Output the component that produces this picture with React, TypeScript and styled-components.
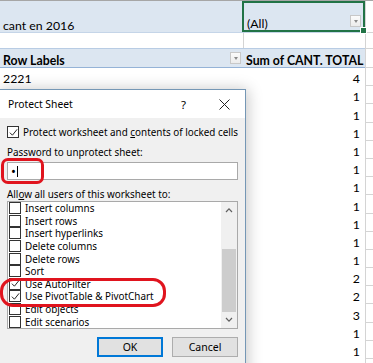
import React from 'react';
import styled, { createGlobalStyle } from 'styled-components';

const GlobalStyle = createGlobalStyle`
  html, body {
    margin: 0;
    padding: 0;
    background: #fff;
    overflow: hidden;
  }
`;

const SHEET_FONT = `Lato, 'Liberation Sans', sans-serif`;
const UI_FONT = `'Noto Sans', 'Open Sans', sans-serif`;

const values = [4, 1, 1, 1, 1, 1, 1, 1, 1, 1, 1, 2, 2, 3, 1, 1, 2];

const permissions = [
  { label: 'Insert columns', checked: false },
  { label: 'Insert rows', checked: false },
  { label: 'Insert hyperlinks', checked: false },
  { label: 'Delete columns', checked: false },
  { label: 'Delete rows', checked: false },
  { label: 'Sort', checked: false },
  { label: 'Use AutoFilter', checked: true },
  { label: 'Use PivotTable & PivotChart', checked: true },
  { label: 'Edit objects', checked: false },
  { label: 'Edit scenarios', checked: false },
];

const Page = styled.div`
  position: relative;
  width: 373px;
  height: 363px;
  overflow: hidden;
  border-top: 1px solid #a6a6a6;
  box-sizing: border-box;
  font-family: ${SHEET_FONT};
  font-size: 12.3px;
  color: #000;
`;

const Row = styled.div<{ $h: number; $tint?: boolean; $line?: string }>`
  display: grid;
  grid-template-columns: 243px 122px 1fr;
  height: ${p => p.$h}px;
  box-sizing: border-box;
  border-bottom: 1px solid ${p => p.$line || 'transparent'};
  background: ${p => (p.$tint ? '#dce6f1' : '#fff')};
`;

const Cell = styled.div<{ $bold?: boolean; $right?: boolean; $divider?: boolean }>`
  position: relative;
  display: flex;
  align-items: flex-end;
  justify-content: ${p => (p.$right ? 'flex-end' : 'flex-start')};
  padding: 0 5px 0 3px;
  font-weight: ${p => (p.$bold ? 700 : 400)};
  white-space: nowrap;
  overflow: hidden;
  line-height: 13px;
  border-left: ${p => (p.$divider ? '1px solid #d4d4d4' : 'none')};
`;

const GridCell = styled.div`
  background: #fff;
  border-left: 1px solid #d4d4d4;
  border-bottom: 1px solid #d4d4d4;
  margin-bottom: -1px;
`;

const ActiveCell = styled(Cell)`
  margin-left: -1px;
  border: 2px solid #217346;
  padding-bottom: 0;
  overflow: visible;
  &::after {
    content: '';
    position: absolute;
    right: -4px;
    bottom: -4px;
    width: 5px;
    height: 5px;
    background: #217346;
    border: 1px solid #fff;
  }
`;

const DropButton = styled.span`
  position: absolute;
  right: 2px;
  bottom: 3px;
  width: 11px;
  height: 12px;
  box-sizing: border-box;
  border: 1px solid #c8c8c8;
  background: linear-gradient(#fbfbfb, #ececec);
  display: flex;
  align-items: center;
  justify-content: center;
  &::before {
    content: '';
    border-left: 2.5px solid transparent;
    border-right: 2.5px solid transparent;
    border-top: 3px solid #8a8a8a;
  }
`;

const Dialog = styled.div`
  position: absolute;
  left: -1px;
  top: 88px;
  width: 247px;
  height: 290px;
  box-sizing: border-box;
  border: 1px solid #7597b5;
  background: #f0f0f0;
  box-shadow: 2px 0 14px rgba(0, 0, 0, 0.22);
  font-family: ${UI_FONT};
  font-size: 9.9px;
  color: #000;
`;

const TitleBar = styled.div`
  display: flex;
  align-items: center;
  height: 28px;
  background: #fff;
  padding-left: 8px;
  font-size: 10.3px;
`;

const TitleText = styled.div`
  flex: 1;
`;

const TitleButton = styled.div`
  width: 41px;
  display: flex;
  justify-content: center;
  align-items: center;
  font-size: 11.5px;
`;

const Body = styled.div`
  display: flex;
  flex-direction: column;
  padding: 8px 6px 0 7px;
`;

const CheckRow = styled.label<{ $h?: number }>`
  display: flex;
  align-items: center;
  gap: 4px;
  height: ${p => p.$h || 13}px;
  white-space: nowrap;
`;

const Box = styled.span<{ $size?: number }>`
  flex: none;
  width: ${p => p.$size || 12}px;
  height: ${p => p.$size || 12}px;
  box-sizing: border-box;
  border: 1px solid #333;
  background: #fff;
  display: flex;
  align-items: center;
  justify-content: center;
`;

const Key = styled.span`
  text-decoration: underline;
  text-underline-offset: 1px;
`;

const FieldLabel = styled.div<{ $top: number }>`
  margin-top: ${p => p.$top}px;
  height: 13px;
  line-height: 13px;
`;

const Input = styled.div`
  margin-top: 3px;
  margin-right: 1px;
  height: 18px;
  box-sizing: border-box;
  border: 1px solid #a9a9a9;
  background: #fff;
  display: flex;
  align-items: center;
  padding-left: 3px;
  font-size: 13px;
`;

const Caret = styled.span`
  width: 1px;
  height: 11px;
  background: #000;
  margin-left: 1px;
`;

const ListBox = styled.div`
  margin-top: 0;
  margin-right: 1px;
  height: 128px;
  box-sizing: border-box;
  border: 1px solid #a9a9a9;
  background: #fff;
  display: flex;
`;

const Items = styled.div`
  flex: 1;
  padding: 0 0 0 1px;
`;

const ScrollBar = styled.div`
  width: 16px;
  background: #f0f0f0;
  display: flex;
  flex-direction: column;
  align-items: center;
`;

const Arrow = styled.div`
  height: 17px;
  display: flex;
  align-items: center;
  justify-content: center;
`;

const Thumb = styled.div`
  width: 14px;
  height: 64px;
  margin-top: 31px;
  margin-bottom: auto;
  background: #cdcdcd;
`;

const Buttons = styled.div`
  display: flex;
  justify-content: flex-end;
  gap: 9px;
  margin-top: 8px;
  margin-right: 1px;
`;

const Button = styled.div<{ $primary?: boolean }>`
  width: 66px;
  height: 20px;
  box-sizing: border-box;
  border: 1px solid ${p => (p.$primary ? '#0078d7' : '#adadad')};
  box-shadow: ${p => (p.$primary ? 'inset 0 0 0 1px #0078d7' : 'none')};
  background: #e1e1e1;
  display: flex;
  align-items: center;
  justify-content: center;
  font-size: 10.5px;
`;

const Mark = styled.div<{ $x: number; $y: number; $w: number; $h: number; $r: number }>`
  position: absolute;
  left: ${p => p.$x}px;
  top: ${p => p.$y}px;
  width: ${p => p.$w}px;
  height: ${p => p.$h}px;
  box-sizing: border-box;
  border: 3px solid #e0141e;
  border-radius: ${p => p.$r}px;
  pointer-events: none;
`;

const Check = ({ size = 9 }: { size?: number }) => (
  <svg width={size} height={size} viewBox="0 0 10 10">
    <path d="M1 5.2 L3.8 8 L9 1.5" fill="none" stroke="#222" strokeWidth="1.1" />
  </svg>
);

const Chevron = ({ up }: { up?: boolean }) => (
  <svg width="8" height="6" viewBox="0 0 8 6">
    <path d={up ? 'M1 5 L4 1.8 L7 5' : 'M1 1 L4 4.2 L7 1'} fill="none" stroke="#606060" strokeWidth="1.2" />
  </svg>
);

const Close = () => (
  <svg width="11" height="11" viewBox="0 0 11 11">
    <path d="M0.5 0.5 L10.5 10.5 M10.5 0.5 L0.5 10.5" stroke="#222" strokeWidth="1" />
  </svg>
);

export default function App() {
  return (
    <>
      <GlobalStyle />
      <Page>
        <Row $h={32} $tint $line="#c5d5e8">
          <Cell style={{ paddingBottom: 0 }}>cant en 2016</Cell>
          <ActiveCell style={{ paddingBottom: 0 }}>
            (All)
            <DropButton />
          </ActiveCell>
          <GridCell />
        </Row>
        <Row $h={16} $line="#b8cce4">
          <Cell />
          <Cell $divider />
          <GridCell />
        </Row>
        <Row $h={19} $tint $line="#95b3d7">
          <Cell $bold>
            Row Labels
            <DropButton />
          </Cell>
          <Cell $bold>Sum of CANT. TOTAL</Cell>
          <GridCell />
        </Row>
        <Row $h={18.2}>
          <Cell>2221</Cell>
          <Cell $right>4</Cell>
          <GridCell />
        </Row>
        {values.slice(1).map((v, i) => (
          <Row key={i} $h={18.2}>
            <Cell />
            <Cell $right>{v}</Cell>
            <GridCell />
          </Row>
        ))}

        <Dialog>
          <TitleBar>
            <TitleText>Protect Sheet</TitleText>
            <TitleButton>?</TitleButton>
            <TitleButton>
              <Close />
            </TitleButton>
          </TitleBar>
          <Body>
            <CheckRow $h={12}>
              <Box>
                <Check />
              </Box>
              <span>
                Protect worksheet and <Key>c</Key>ontents of locked cells
              </span>
            </CheckRow>
            <FieldLabel $top={8}>Password to unprotect sheet:</FieldLabel>
            <Input>
              •<Caret />
            </Input>
            <FieldLabel $top={8}>
              All<Key>o</Key>w all users of this worksheet to:
            </FieldLabel>
            <ListBox>
              <Items>
                {permissions.map(p => (
                  <CheckRow key={p.label} $h={12.6}>
                    <Box $size={12}>{p.checked && <Check />}</Box>
                    <span>{p.label}</span>
                  </CheckRow>
                ))}
              </Items>
              <ScrollBar>
                <Arrow>
                  <Chevron up />
                </Arrow>
                <Thumb />
                <Arrow>
                  <Chevron />
                </Arrow>
              </ScrollBar>
            </ListBox>
            <Buttons>
              <Button $primary>OK</Button>
              <Button>Cancel</Button>
            </Buttons>
          </Body>
          <Mark $x={1} $y={68} $w={43} $h={26} $r={7} />
          <Mark $x={0} $y={188} $w={166} $h={29} $r={13} />
        </Dialog>
      </Page>
    </>
  );
}
